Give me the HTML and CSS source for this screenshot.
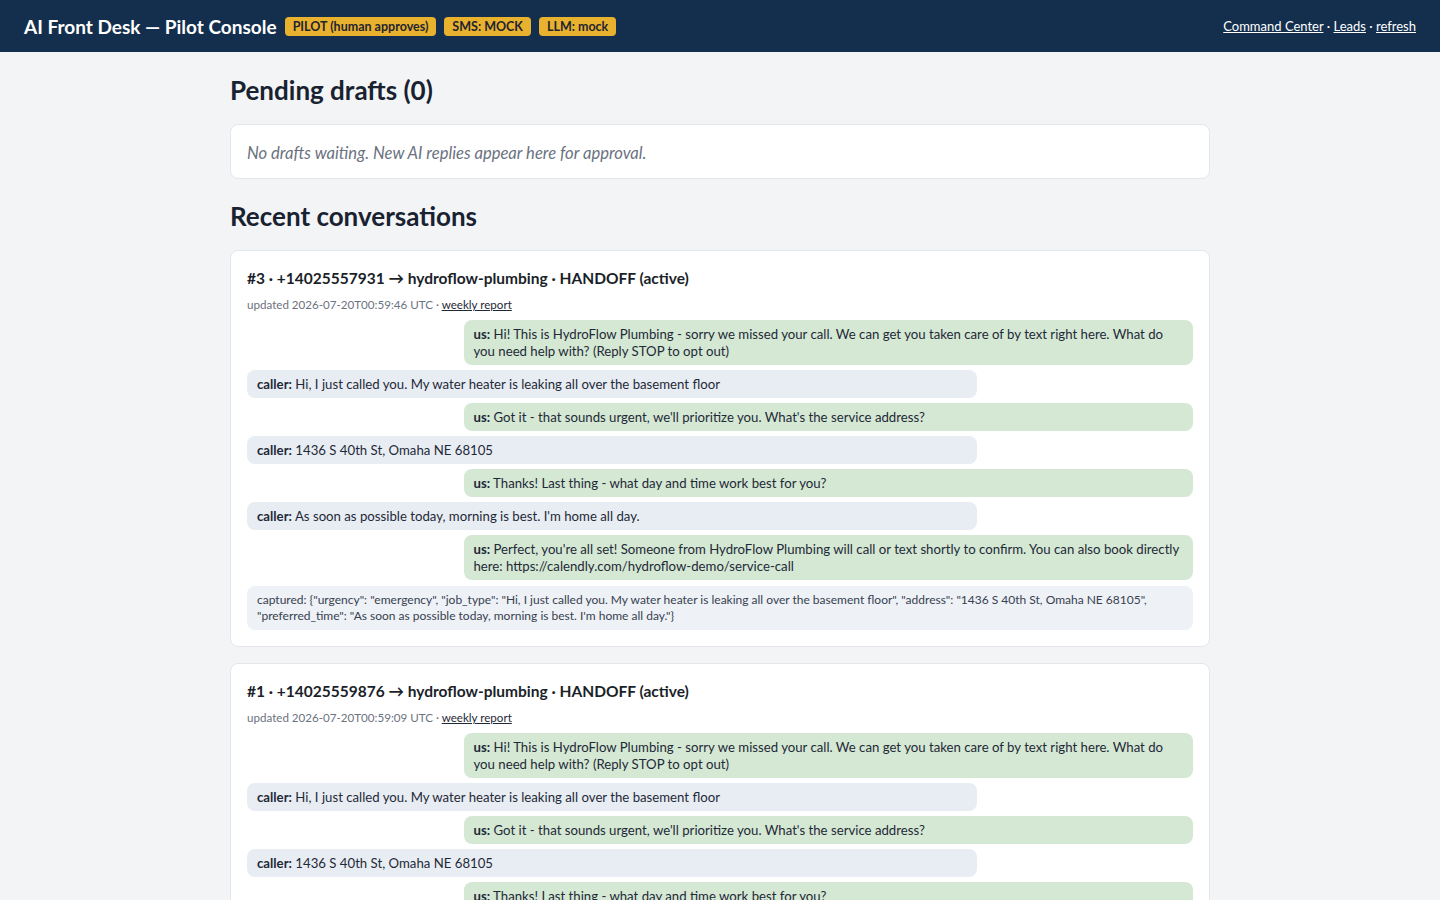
FILE: index.html
```html
<!DOCTYPE html>
<html lang="en">
<head>
  <meta charset="UTF-8">
  <meta name="viewport" content="width=device-width, initial-scale=1.0">
  <title>AI Front Desk — Pilot Console</title>
  <link rel="stylesheet" href="styles.css">
</head>
<body>

  <!-- Top bar -->
  <header class="topbar">
    <div class="brand">
      <h1>AI Front Desk — Pilot Console</h1>
      <span class="badge">PILOT (human approves)</span>
      <span class="badge">SMS: MOCK</span>
      <span class="badge">LLM: mock</span>
    </div>
    <nav class="toplinks">
      <a href="#">Command Center</a> · <a href="#">Leads</a> · <a href="#">refresh</a>
    </nav>
  </header>

  <main class="wrap">

    <h2>Pending drafts (0)</h2>
    <div class="card empty">No drafts waiting. New AI replies appear here for approval.</div>

    <h2>Recent conversations</h2>

    <!-- Conversation #3 -->
    <div class="card convo">
      <div class="convo-title">#3 · +14025557931 → hydroflow-plumbing · HANDOFF (active)</div>
      <div class="meta">updated 2026-07-20T00:59:46 UTC · <a href="#">weekly report</a></div>
      <div class="msg us"><b>us:</b> Hi! This is HydroFlow Plumbing - sorry we missed your call. We can get you taken care of by text right here. What do you need help with? (Reply STOP to opt out)</div>
      <div class="msg caller"><b>caller:</b> Hi, I just called you. My water heater is leaking all over the basement floor</div>
      <div class="msg us"><b>us:</b> Got it - that sounds urgent, we'll prioritize you. What's the service address?</div>
      <div class="msg caller"><b>caller:</b> 1436 S 40th St, Omaha NE 68105</div>
      <div class="msg us"><b>us:</b> Thanks! Last thing - what day and time work best for you?</div>
      <div class="msg caller"><b>caller:</b> As soon as possible today, morning is best. I'm home all day.</div>
      <div class="msg us"><b>us:</b> Perfect, you're all set! Someone from HydroFlow Plumbing will call or text shortly to confirm. You can also book directly here: https://calendly.com/hydroflow-demo/service-call</div>
      <div class="captured">captured: {"urgency": "emergency", "job_type": "Hi, I just called you. My water heater is leaking all over the basement floor", "address": "1436 S 40th St, Omaha NE 68105", "preferred_time": "As soon as possible today, morning is best. I'm home all day."}</div>
    </div>

    <!-- Conversation #1 -->
    <div class="card convo">
      <div class="convo-title">#1 · +14025559876 → hydroflow-plumbing · HANDOFF (active)</div>
      <div class="meta">updated 2026-07-20T00:59:09 UTC · <a href="#">weekly report</a></div>
      <div class="msg us"><b>us:</b> Hi! This is HydroFlow Plumbing - sorry we missed your call. We can get you taken care of by text right here. What do you need help with? (Reply STOP to opt out)</div>
      <div class="msg caller"><b>caller:</b> Hi, I just called you. My water heater is leaking all over the basement floor</div>
      <div class="msg us"><b>us:</b> Got it - that sounds urgent, we'll prioritize you. What's the service address?</div>
      <div class="msg caller"><b>caller:</b> 1436 S 40th St, Omaha NE 68105</div>
      <div class="msg us"><b>us:</b> Thanks! Last thing - what day and time work best for you?</div>
      <div class="msg caller"><b>caller:</b> As soon as possible today, morning is best. I'm home all day.</div>
    </div>

  </main>

</body>
</html>
```

FILE: styles.css
```css
/* Base */
body {
  margin: 0;
  font-family: Lato, "Open Sans", sans-serif;
  background: #f3f4f6;
  color: #1f2937;
}

a {
  color: inherit;
}

/* Top bar */
.topbar {
  display: flex;
  justify-content: space-between;
  align-items: center;
  height: 52px;
  padding: 0 24px;
  background: #142f4e;
  color: #fff;
}

.brand {
  display: flex;
  align-items: center;
  gap: 8px;
}

.brand h1 {
  margin: 0;
  font-size: 19px;
  font-weight: 700;
}

.badge {
  background: #e8b22e;
  color: #1f2430;
  font-size: 12.5px;
  font-weight: 700;
  padding: 2px 8px;
  border-radius: 4px;
}

.toplinks {
  font-size: 13px;
}

/* Main column */
.wrap {
  width: 980px;
  margin: 0 auto;
  padding: 23px 0;
}

.wrap h2 {
  margin: 0 0 18px;
  font-size: 26px;
  line-height: 31px;
  color: #182230;
}

.card {
  background: #fff;
  border: 1px solid #e3e6ea;
  border-radius: 8px;
  padding: 16px;
  margin-bottom: 16px;
}

.empty {
  font-style: italic;
  color: #6b7280;
  font-size: 16.6px;
  line-height: 21px;
  padding: 18px 16px 14px;
  margin-bottom: 22px;
}

/* Conversations */
.convo-title {
  font-size: 15.5px;
  font-weight: 700;
  line-height: 22px;
  color: #1a1f29;
}

.meta {
  font-size: 11.6px;
  line-height: 17px;
  color: #6b7280;
  margin: 7px 0 7px;
}

.meta a {
  color: #1f2937;
}

.msg {
  width: 75%;
  padding: 6px 10px 5px;
  border-radius: 8px;
  font-size: 13.2px;
  line-height: 17px;
  margin-bottom: 5px;
  color: #1f2937;
}

.msg.us {
  background: #d4e8d4;
  margin-left: auto;
}

.msg.caller {
  background: #e8edf4;
}

.captured {
  background: #eef1f5;
  border-radius: 8px;
  margin-top: 6px;
  padding: 6px 10px;
  font-size: 12px;
  line-height: 16px;
  color: #374151;
}
```
